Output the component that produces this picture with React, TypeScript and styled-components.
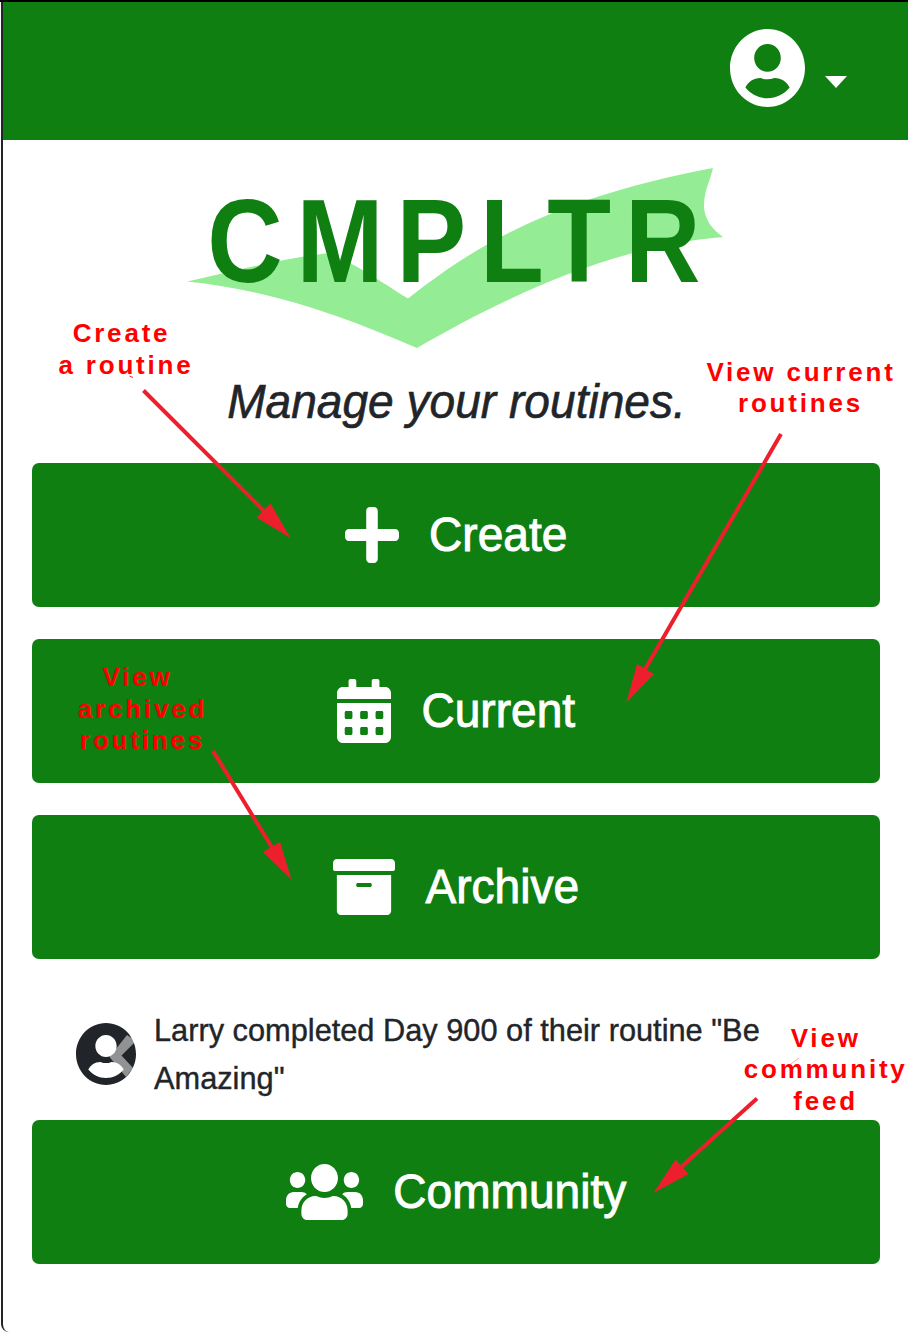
import React from "react";
import styled, { createGlobalStyle } from "styled-components";
import { FaPlus, FaCalendarAlt, FaArchive, FaUsers, FaUserCircle } from "react-icons/fa";

const GREEN = "#107f12";
const INK = "#212529";

const GlobalStyle = createGlobalStyle`
  *, *::before, *::after { box-sizing: border-box; }
  body {
    margin: 0;
    background: #fff;
    color: ${INK};
    font-family: "Liberation Sans", Arial, sans-serif;
    overflow: hidden;
  }
`;

const Screen = styled.div`
  position: relative;
  width: 908px;
  height: 1332px;
  overflow: hidden;
  background: #fff;
  border-top: 2px solid #000;
  padding-left: 1px;
`;

const Frame = styled.div`
  height: 100%;
  border-left: 2px solid ${INK};
  border-bottom-left-radius: 8px;
`;

const Header = styled.header`
  display: flex;
  justify-content: flex-end;
  align-items: flex-start;
  gap: 20px;
  height: 138px;
  padding: 27px 61px 0 0;
  background: ${GREEN};
  color: #fff;
`;

const Avatar = styled(FaUserCircle).attrs({ preserveAspectRatio: "none", viewBox: "0 8 496 496" })<{ $w: number; $h: number }>`
  display: block;
  flex: none;
  width: ${(p) => p.$w}px;
  height: ${(p) => p.$h}px;
`;

const Caret = styled.span`
  margin-top: 47px;
  border: 11.5px solid transparent;
  border-top: 12px solid #fff;
  border-bottom: 0;
`;

const Main = styled.main`
  display: flex;
  flex-direction: column;
  padding: 22px 28px 0 29px;
`;

const Logo = styled.svg`
  display: block;
  align-self: center;
  width: 544px;
  height: 192px;
`;

const Tagline = styled.h1`
  margin: 14px 0 0;
  height: 94.5px;
  padding: 7px 0 0 1px;
  text-align: center;
  font-size: 46.1px;
  line-height: 54px;
  font-weight: 400;
  font-style: italic;
  transform: scaleY(1.045);
  transform-origin: 50% 52px;
  -webkit-text-stroke: 0.6px ${INK};
`;

const Actions = styled.div`
  display: flex;
  flex-direction: column;
  gap: 32.3px;
`;

const ActionButton = styled.button`
  display: flex;
  align-items: center;
  justify-content: center;
  gap: 30.5px;
  width: 100%;
  height: 144px;
  padding: 0;
  border: 0;
  border-radius: 7px;
  background: ${GREEN};
  color: #fff;
  font-family: inherit;

  svg {
    flex: none;
    height: 64px;
  }
`;

const Label = styled.span`
  margin-bottom: 1.6px;
  font-size: 46.1px;
  line-height: 54px;
  transform: scaleY(1.045);
  -webkit-text-stroke: 0.9px #fff;
`;

const Feed = styled.section`
  display: flex;
  align-items: center;
  height: 160.5px;
  padding: 29px 60px 0 44px;
  gap: 18px;
`;

const FeedPicture = styled.div`
  position: relative;
  flex: none;
`;

const PreviousArrow = styled.svg`
  position: absolute;
  left: 0;
  top: 0;
  width: 60px;
  height: 62px;
`;

const FeedText = styled.div`
  display: flex;
  flex-direction: column;
  align-items: flex-start;
  margin-top: 2px;
`;

const FeedLine = styled.span`
  white-space: nowrap;
  font-size: 30.75px;
  line-height: 36px;
  margin: 6px 0;
  transform: scaleY(1.04);
  -webkit-text-stroke: 0.4px ${INK};
`;

const Note = styled.div<{ $x: number; $y: number }>`
  position: absolute;
  left: ${(p) => p.$x}px;
  top: ${(p) => p.$y}px;
  display: flex;
  flex-direction: column;
  align-items: center;
  width: 220px;
  margin-left: -110px;
  color: #f00;
  font-size: 26px;
  font-weight: 700;
  line-height: 31.5px;
  letter-spacing: 2.8px;
`;

const NoteLine = styled.span<{ $shift: number }>`
  white-space: nowrap;
  padding-left: ${(p) => Math.max(p.$shift, 0) * 2}px;
  padding-right: ${(p) => Math.max(-p.$shift, 0) * 2}px;
`;

const Arrows = styled.svg`
  position: absolute;
  left: 0;
  top: -2px;
  width: 908px;
  height: 1332px;
  pointer-events: none;
`;

const actions = [
  { label: "Create", Icon: FaPlus, width: 54 },
  { label: "Current", Icon: FaCalendarAlt, width: 54 },
  { label: "Archive", Icon: FaArchive, width: 62 },
];

const notes = [
  { x: 121.5, y: 316, lines: [{ text: "Create", shift: 0 }, { text: "a routine", shift: 4.5 }] },
  { x: 801, y: 354.8, lines: [{ text: "View current", shift: 0 }, { text: "routines", shift: -0.5 }] },
  { x: 142.5, y: 660, lines: [{ text: "View", shift: -5 }, { text: "archived", shift: 0 }, { text: "routines", shift: 0 }] },
  { x: 825.7, y: 1020.8, lines: [{ text: "View", shift: 0 }, { text: "community", shift: 0 }, { text: "feed", shift: 0 }] },
];

const arrows = [
  { line: "M143.5 390.5L266 513", head: "290.5,538 270.5,503.5 256.5,517.5" },
  { line: "M781 434L644 671", head: "626.5,702.5 637,664 654,674" },
  { line: "M213 751L273 849", head: "291.5,879.5 263,852 280,842" },
  { line: "M757 1098.5L680 1168", head: "653.5,1193 675.5,1159.5 688.5,1174" },
];

export default function App() {
  return (
    <Screen>
      <GlobalStyle />
      <Frame>
        <Header>
          <Avatar $w={75} $h={78} />
          <Caret />
        </Header>
        <Main>
          <Logo viewBox="184 162 544 192">
            <path
              fill="#94ed94"
              d="M187 281.5 C230 272 275 260 325 253.500 C348 258 376 279 408 298.500 C470 250 545 200 713 168 C709 185 704 190 704 207 C705 220 712 229 723 237 C610 246 500 300 417 348 C340 315 270 290 187 281.500Z"
            />
            <text
              transform="translate(0 282) scale(.885 1)"
              x="234.300 335 447.900 542.500 618.300 706.300"
              fontFamily="Liberation Sans, Arial, sans-serif"
              fontWeight="700"
              fontSize="118"
              fill={GREEN}
            >
              CMPLTR
            </text>
          </Logo>
          <Tagline>Manage your routines.</Tagline>
          <Actions>
            {actions.map(({ label, Icon, width }) => (
              <ActionButton key={label}>
                <Icon style={{ width }} preserveAspectRatio="none" />
                <Label>{label}</Label>
              </ActionButton>
            ))}
          </Actions>
          <Feed>
            <FeedPicture>
              <Avatar $w={60} $h={62} />
              <PreviousArrow viewBox="0 0 60 62">
                <path fill="#fff" fillOpacity=".5" d="M51 12L60 18L45.500 32.500L57 45L50 54L33.500 34Z" />
              </PreviousArrow>
            </FeedPicture>
            <FeedText>
              <FeedLine>Larry completed Day 900 of their routine "Be</FeedLine>
              <FeedLine>Amazing"</FeedLine>
            </FeedText>
          </Feed>
          <ActionButton>
            <FaUsers style={{ width: 77 }} preserveAspectRatio="none" />
            <Label>Community</Label>
          </ActionButton>
        </Main>
      </Frame>
      {notes.map((note) => (
        <Note key={note.y} $x={note.x} $y={note.y}>
          {note.lines.map((line) => (
            <NoteLine key={line.text} $shift={line.shift}>
              {line.text}
            </NoteLine>
          ))}
        </Note>
      ))}
      <Arrows viewBox="0 0 908 1332">
        {arrows.map((arrow) => (
          <g key={arrow.line}>
            <path d={arrow.line} stroke="#ed1f2d" strokeWidth="4" />
            <polygon points={arrow.head} fill="#ed1f2d" />
          </g>
        ))}
        <path d="M129.500 376L133 377.500" stroke="#ed1f2d" strokeWidth="1" />
        <path d="M791 1064L799 1058" stroke="#f8a5ab" strokeWidth="1" />
      </Arrows>
    </Screen>
  );
}
